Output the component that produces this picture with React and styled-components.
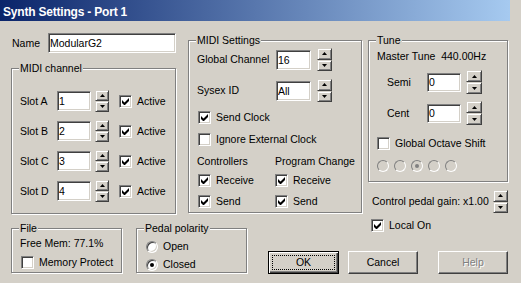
import React from 'react'
import styled, { createGlobalStyle } from 'styled-components'

const GlobalStyle = createGlobalStyle`
  html, body {
    margin: 0;
    padding: 0;
    background: #d4d0c8;
  }
  body {
    font-family: "Liberation Sans", Arial, sans-serif;
    font-size: 10.5px;
    color: #000;
  }
`

const Window = styled.div`
  width: 521px;
  height: 283px;
  background: #d4d0c8;
  overflow: hidden;
`

const TitleBar = styled.div`
  box-sizing: border-box;
  width: 510px;
  height: 21px;
  padding: 2px 0 0 3px;
  display: flex;
  align-items: center;
  background: linear-gradient(to right, #0a246a, #a6caf0);
  color: #fff;
  font-weight: bold;
  font-size: 12px;
  letter-spacing: -0.2px;
  line-height: 14px;
`

const Body = styled.div`
  padding-left: 11px;
`

const TopRow = styled.div`
  display: flex;
  align-items: flex-start;
  height: 193px;
`

const BottomRow = styled.div`
  display: flex;
  align-items: flex-start;
`

const LeftCol = styled.div`
  width: 166px;
  flex: none;
`

const RightCol = styled.div`
  width: 141px;
  flex: none;
  margin-left: 6px;
`

const NameRow = styled.div`
  display: flex;
  align-items: center;
  margin-top: 12px;
  height: 20px;
`

const NameLabel = styled.span`
  width: 36px;
  padding-left: 1px;
  line-height: 13px;
`

// etched group frame, legend sits over the top line
const Group = styled.div`
  position: relative;
  box-sizing: border-box;
  flex: none;
  width: ${p => p.$w}px;
  height: ${p => p.$h}px;
  margin-top: ${p => p.$mt || 0}px;
  margin-left: ${p => p.$ml || 0}px;
  border: 1px solid #808080;
  box-shadow: inset 1px 1px 0 #fff, 1px 1px 0 #fff;
`

const Legend = styled.span`
  position: absolute;
  top: -7px;
  left: 7px;
  padding: 0 1px;
  background: #d4d0c8;
  line-height: 13px;
`

const Inner = styled.div`
  display: flex;
  flex-direction: column;
  align-items: flex-start;
  padding-left: ${p => p.$pl || 8}px;
`

const SlotList = styled.div`
  display: flex;
  flex-direction: column;
  gap: 8px;
  padding: 21px 0 0 8px;
`

const FieldRow = styled.div`
  display: flex;
  align-items: center;
  height: ${p => p.$h || 22}px;
  margin-top: ${p => p.$mt || 0}px;
  padding-left: ${p => p.$pl || 0}px;
`

const RowLabel = styled.span`
  width: ${p => p.$w}px;
  flex: none;
  line-height: 13px;
  white-space: nowrap;
`

const Line = styled.div`
  line-height: 13px;
  white-space: pre;
  margin-top: ${p => p.$mt || 0}px;
`

const Field = styled.input`
  box-sizing: border-box;
  flex: none;
  width: ${p => p.$w}px;
  height: ${p => p.$h || 20}px;
  margin: 0;
  padding: 0 0 0 1px;
  border: 1px solid;
  border-color: #808080 #fff #fff #808080;
  box-shadow: inset 1px 1px 0 #404040, inset -1px -1px 0 #d4d0c8;
  background: #fff;
  font: inherit;
  color: #000;
  outline: none;
`

const SpinBox = styled.div`
  display: flex;
  flex-direction: column;
  flex: none;
  width: ${p => p.$w}px;
  height: ${p => p.$h}px;
  margin-left: ${p => p.$gap || 0}px;
  margin-right: ${p => p.$mr || 0}px;
`

const SpinButton = styled.div`
  flex: 1;
  box-sizing: border-box;
  display: flex;
  align-items: center;
  justify-content: center;
  background: #d4d0c8;
  border: 1px solid;
  border-color: #d4d0c8 #404040 #404040 #d4d0c8;
  box-shadow: inset 1px 1px 0 #fff, inset -1px -1px 0 #808080;
`

const CheckRow = styled.div`
  display: flex;
  align-items: center;
  height: 13px;
  margin-top: ${p => p.$mt || 0}px;
  margin-left: ${p => p.$ml || 0}px;
`

const CheckBox = styled.span`
  box-sizing: border-box;
  flex: none;
  width: 13px;
  height: 13px;
  display: flex;
  align-items: center;
  justify-content: center;
  border: 1px solid;
  border-color: #808080 #fff #fff #808080;
  box-shadow: inset 1px 1px 0 #404040, inset -1px -1px 0 #d4d0c8;
  background: #fff;
`

const CheckText = styled.span`
  margin-left: 5px;
  line-height: 13px;
  white-space: nowrap;
`

const RadioCircle = styled.span`
  box-sizing: border-box;
  flex: none;
  width: 12px;
  height: 12px;
  border-radius: 50%;
  display: flex;
  align-items: center;
  justify-content: center;
  border: 1px solid;
  border-color: #808080 #fff #fff #808080;
  box-shadow: ${p => p.$disabled
    ? 'none'
    : 'inset 1px 1px 0 #404040, inset -1px -1px 0 #d4d0c8'};
  background: ${p => p.$disabled ? '#d4d0c8' : '#fff'};
`

const RadioDot = styled.span`
  width: 4px;
  height: 4px;
  border-radius: 50%;
  background: ${p => p.$disabled ? '#808080' : '#000'};
`

const RadioStrip = styled.div`
  display: flex;
  gap: 5px;
  margin-top: ${p => p.$mt || 0}px;
`

const PairRow = styled.div`
  display: grid;
  grid-template-columns: 78px 1fr;
  align-items: center;
  margin-top: ${p => p.$mt || 0}px;
`

const PedalRow = styled.div`
  display: flex;
  align-items: center;
  height: 23px;
  margin-top: 8px;
  padding-left: 4px;
  justify-content: space-between;
`

const ActionCol = styled.div`
  margin-left: 21px;
`

const LocalRow = styled.div`
  margin-top: 5px;
  padding-left: 103px;
`

const ButtonRow = styled.div`
  display: flex;
  margin-top: 19px;
`

const Button = styled.button`
  box-sizing: border-box;
  width: ${p => p.$w}px;
  height: 23px;
  margin: 0 0 0 ${p => p.$ml || 0}px;
  padding: 0;
  display: flex;
  align-items: center;
  justify-content: center;
  font: inherit;
  line-height: 13px;
  background: #d4d0c8;
  color: ${p => p.$disabled ? '#808080' : '#000'};
  text-shadow: ${p => p.$disabled ? '1px 1px 0 #fff' : 'none'};
  border: 1px solid;
  border-color: ${p => p.$default ? '#000' : '#fff #404040 #404040 #fff'};
  box-shadow: ${p => p.$default
    ? 'inset 1px 1px 0 #fff, inset -1px -1px 0 #404040, inset -2px -2px 0 #808080'
    : 'inset -1px -1px 0 #808080, inset 1px 1px 0 #d4d0c8'};
`

const FocusRing = styled.span`
  box-sizing: border-box;
  width: calc(100% - 6px);
  height: calc(100% - 6px);
  display: flex;
  align-items: center;
  justify-content: center;
  border: 1px dotted #000;
`

function Spinner({ w, h, gap, mr }) {
  return (
    <SpinBox $w={w} $h={h} $gap={gap} $mr={mr}>
      <SpinButton>
        <svg width="5" height="3" viewBox="0 0 5 3"><polygon points="2.5,0 5,3 0,3" fill="#000" /></svg>
      </SpinButton>
      <SpinButton>
        <svg width="5" height="3" viewBox="0 0 5 3"><polygon points="0,0 5,0 2.5,3" fill="#000" /></svg>
      </SpinButton>
    </SpinBox>
  )
}

function Check({ checked, children, mt, ml }) {
  return (
    <CheckRow $mt={mt} $ml={ml}>
      <CheckBox>
        {checked && (
          <svg width="7" height="7" viewBox="0 0 7 7">
            <polygon points="0,2 2.5,4.5 7,0 7,3 2.5,7.5 0,5" fill="#000" />
          </svg>
        )}
      </CheckBox>
      <CheckText>{children}</CheckText>
    </CheckRow>
  )
}

function Radio({ checked, disabled, children, mt }) {
  return (
    <CheckRow $mt={mt}>
      <RadioCircle $disabled={disabled}>
        {checked && <RadioDot $disabled={disabled} />}
      </RadioCircle>
      {children && <CheckText>{children}</CheckText>}
    </CheckRow>
  )
}

const slots = [
  { name: 'Slot A', value: '1' },
  { name: 'Slot B', value: '2' },
  { name: 'Slot C', value: '3' },
  { name: 'Slot D', value: '4' },
]

export default function App() {
  return (
    <Window>
      <GlobalStyle />
      <TitleBar>Synth Settings - Port 1</TitleBar>
      <Body>
        <TopRow>
          <LeftCol>
            <NameRow>
              <NameLabel>Name</NameLabel>
              <Field $w={128} $h={20} readOnly value="ModularG2" />
            </NameRow>
            <Group $w={165} $h={146} $mt={15}>
              <Legend>MIDI channel</Legend>
              <SlotList>
                {slots.map(s => (
                  <FieldRow key={s.name}>
                    <RowLabel $w={37}>{s.name}</RowLabel>
                    <Field $w={34} $h={20} readOnly value={s.value} />
                    <Spinner w={14} h={22} gap={4} />
                    <Check checked ml={10}>Active</Check>
                  </FieldRow>
                ))}
              </SlotList>
            </Group>
          </LeftCol>

          <Group $w={174} $h={173} $mt={19} $ml={11}>
            <Legend>MIDI Settings</Legend>
            <Inner>
              <FieldRow $mt={7} $h={23}>
                <RowLabel $w={79}>Global Channel</RowLabel>
                <Field $w={35} $h={20} readOnly value="16" />
                <Spinner w={15} h={23} gap={6} />
              </FieldRow>
              <FieldRow $mt={8} $h={23}>
                <RowLabel $w={79}>Sysex ID</RowLabel>
                <Field $w={35} $h={20} readOnly value="All" />
                <Spinner w={15} h={23} gap={6} />
              </FieldRow>
              <Check checked mt={9} ml={1}>Send Clock</Check>
              <Check mt={9} ml={1}>Ignore External Clock</Check>
              <PairRow $mt={9}>
                <Line>Controllers</Line>
                <Line>Program Change</Line>
              </PairRow>
              <PairRow $mt={6}>
                <Check checked ml={1}>Receive</Check>
                <Check checked>Receive</Check>
              </PairRow>
              <PairRow $mt={8}>
                <Check checked ml={1}>Send</Check>
                <Check checked>Send</Check>
              </PairRow>
            </Inner>
          </Group>

          <RightCol>
            <Group $w={140} $h={142} $mt={19}>
              <Legend>Tune</Legend>
              <Inner>
                <Line $mt={9}>Master Tune  440.00Hz</Line>
                <FieldRow $mt={7} $h={24} $pl={10}>
                  <RowLabel $w={40}>Semi</RowLabel>
                  <Field $w={34} $h={19} readOnly value="0" />
                  <Spinner w={16} h={24} gap={5} />
                </FieldRow>
                <FieldRow $mt={7} $h={24} $pl={10}>
                  <RowLabel $w={40}>Cent</RowLabel>
                  <Field $w={34} $h={19} readOnly value="0" />
                  <Spinner w={16} h={24} gap={5} />
                </FieldRow>
                <Check mt={12}>Global Octave Shift</Check>
                <RadioStrip $mt={9}>
                  {[0, 1, 2, 3, 4].map(i => (
                    <Radio key={i} disabled checked={i === 2} />
                  ))}
                </RadioStrip>
              </Inner>
            </Group>
            <PedalRow>
              <RowLabel>Control pedal gain: x1.00</RowLabel>
              <Spinner w={15} h={23} mr={1} />
            </PedalRow>
          </RightCol>
        </TopRow>

        <BottomRow>
          <Group $w={111} $h={45} $mt={14}>
            <Legend>File</Legend>
            <Inner>
              <Line $mt={8}>Free Mem: 77.1%</Line>
              <Check mt={6} ml={1}>Memory Protect</Check>
            </Inner>
          </Group>
          <Group $w={111} $h={45} $mt={14} $ml={14}>
            <Legend>Pedal polarity</Legend>
            <Inner $pl={9}>
              <Radio mt={11}>Open</Radio>
              <Radio checked mt={5}>Closed</Radio>
            </Inner>
          </Group>
          <ActionCol>
            <LocalRow>
              <Check checked>Local On</Check>
            </LocalRow>
            <ButtonRow>
              <Button $w={71} $default>
                <FocusRing>OK</FocusRing>
              </Button>
              <Button $w={70} $ml={9}>Cancel</Button>
              <Button $w={70} $ml={20} $disabled>Help</Button>
            </ButtonRow>
          </ActionCol>
        </BottomRow>
      </Body>
    </Window>
  )
}
